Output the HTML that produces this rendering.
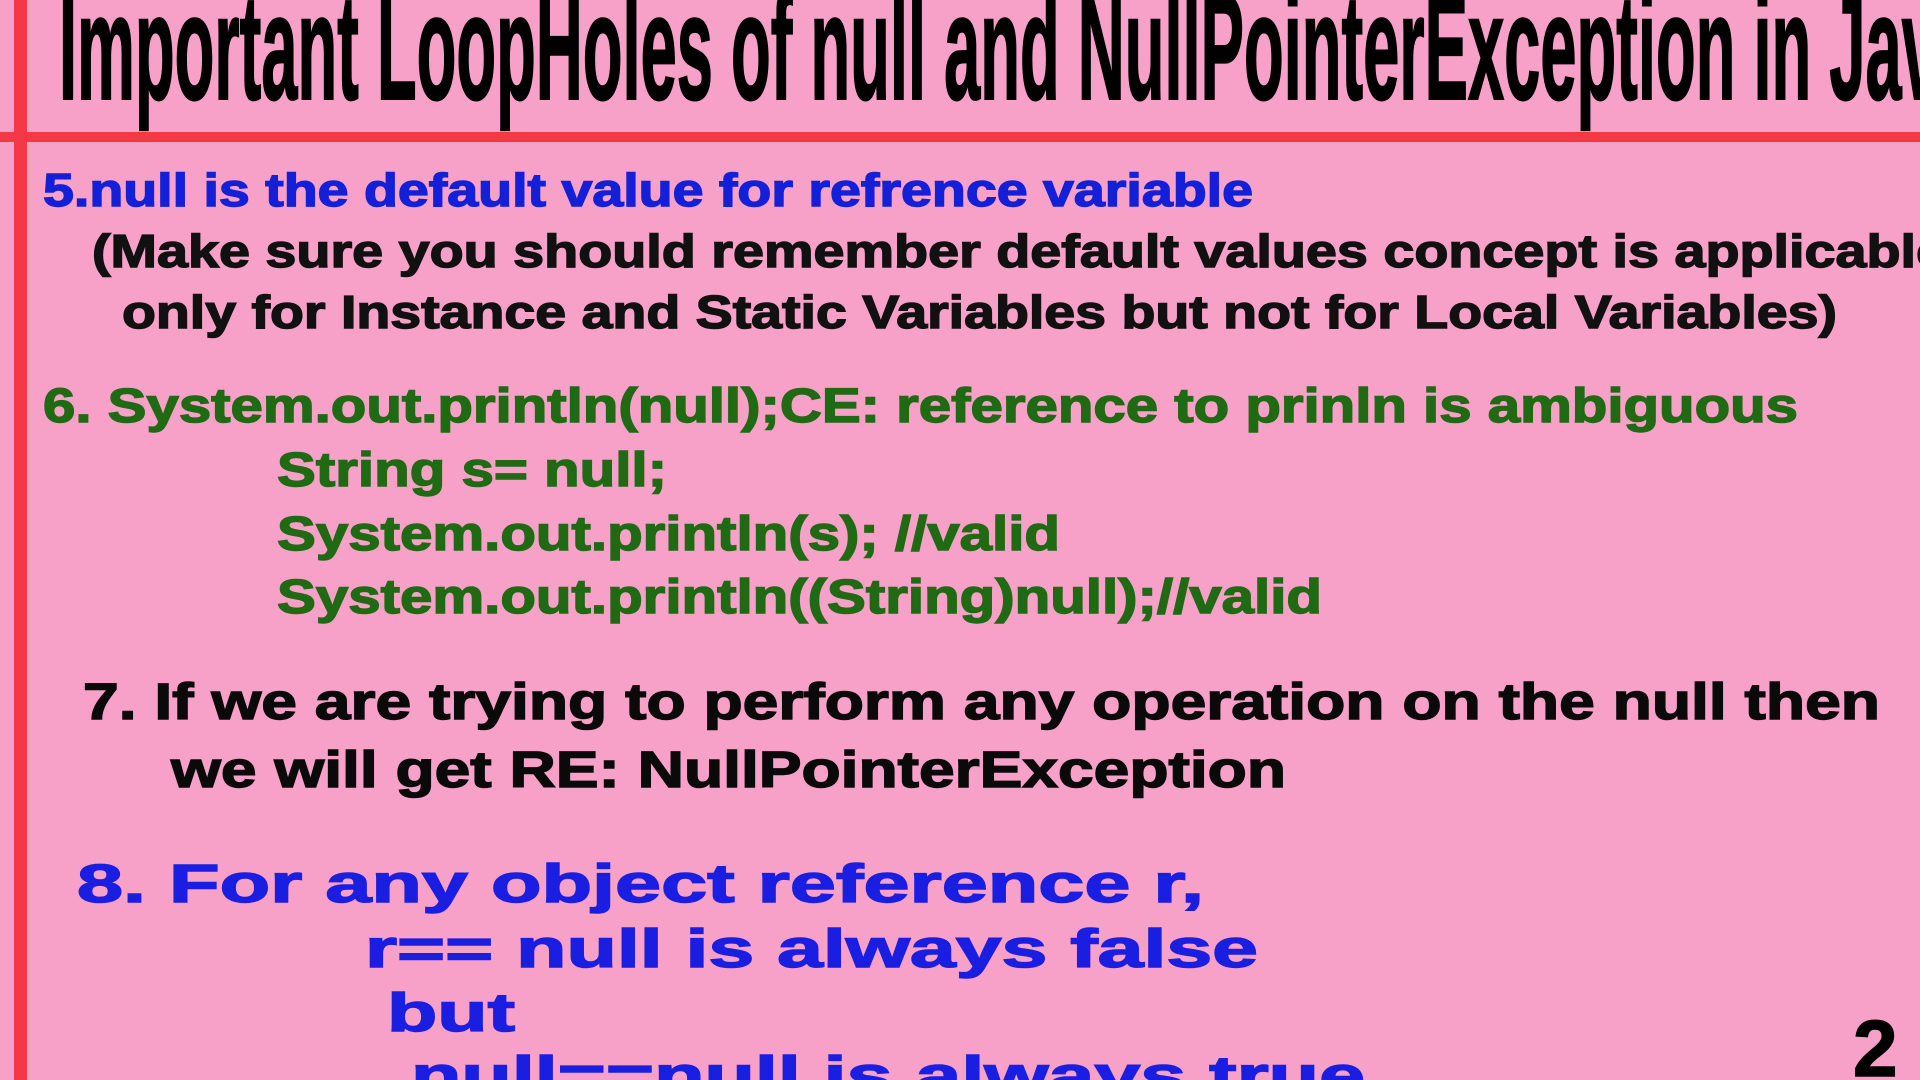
<!DOCTYPE html>
<html><head><meta charset="utf-8"><style>
html,body{margin:0;padding:0;background:#f7a0c8;width:1920px;height:1080px;overflow:hidden}
svg{display:block}
text{font-family:"Liberation Sans",Arial,sans-serif;font-weight:bold}
.g{stroke-width:1.4px}
</style></head><body>
<svg width="1920" height="1080" viewBox="0 0 1920 1080" xmlns="http://www.w3.org/2000/svg">
<rect width="1920" height="1080" fill="#f7a0c8"/>
<rect x="14" y="0" width="13" height="1080" fill="#f43848"/>
<rect x="0" y="132" width="1920" height="10" fill="#f43848"/>
<text x="59" y="99" font-size="150" stroke="#000" stroke-width="2" style="font-family:'Liberation Sans Narrow','Liberation Sans',sans-serif" fill="#000" textLength="1915" lengthAdjust="spacingAndGlyphs">Important LoopHoles of null and NullPointerException in Java</text>

<text class="g" stroke="#1420d8" x="43" y="206" font-size="46" fill="#1420d8" textLength="1210" lengthAdjust="spacingAndGlyphs">5.null is the default value for refrence variable</text>
<text class="g" stroke="#111" x="92" y="267" font-size="46" fill="#111" textLength="1855" lengthAdjust="spacingAndGlyphs">(Make sure you should remember default values concept is applicable</text>
<text class="g" stroke="#111" x="122" y="328" font-size="46" fill="#111" textLength="1715" lengthAdjust="spacingAndGlyphs">only for Instance and Static Variables but not for Local Variables)</text>

<text class="g" stroke="#1f6a12" x="43" y="422" font-size="48" fill="#1f6a12" textLength="1755" lengthAdjust="spacingAndGlyphs">6. System.out.println(null);CE: reference to prinln is ambiguous</text>
<text class="g" stroke="#1f6a12" x="277" y="486" font-size="48" fill="#1f6a12" textLength="390" lengthAdjust="spacingAndGlyphs">String s= null;</text>
<text class="g" stroke="#1f6a12" x="277" y="550" font-size="48" fill="#1f6a12" textLength="783" lengthAdjust="spacingAndGlyphs">System.out.println(s); //valid</text>
<text class="g" stroke="#1f6a12" x="277" y="613" font-size="48" fill="#1f6a12" textLength="1045" lengthAdjust="spacingAndGlyphs">System.out.println((String)null);//valid</text>

<text class="g" stroke="#0a0a0a" x="83" y="719" font-size="51" fill="#0a0a0a" textLength="1797" lengthAdjust="spacingAndGlyphs">7. If we are trying to perform any operation on the null then</text>
<text class="g" stroke="#0a0a0a" x="171" y="787" font-size="51" fill="#0a0a0a" textLength="1115" lengthAdjust="spacingAndGlyphs">we will get RE: NullPointerException</text>

<text class="g" stroke="#1a1ee0" x="77" y="902" font-size="54" fill="#1a1ee0" textLength="1127" lengthAdjust="spacingAndGlyphs">8. For any object reference r,</text>
<text class="g" stroke="#1a1ee0" x="365" y="967" font-size="54" fill="#1a1ee0" textLength="893" lengthAdjust="spacingAndGlyphs">r== null is always false</text>
<text class="g" stroke="#1a1ee0" x="387" y="1031" font-size="54" fill="#1a1ee0" textLength="128" lengthAdjust="spacingAndGlyphs">but</text>
<text class="g" stroke="#1a1ee0" x="411" y="1094" font-size="54" fill="#1a1ee0" textLength="954" lengthAdjust="spacingAndGlyphs">null==null is always true</text>

<text x="1853" y="1076" font-size="80" fill="#000" stroke="#000" stroke-width="1.5">2</text>
</svg>
</body></html>
